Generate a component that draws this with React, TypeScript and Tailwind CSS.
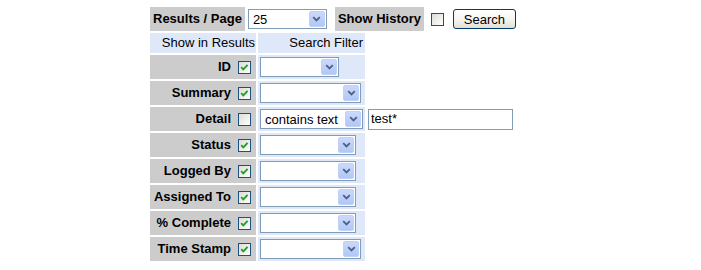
import React from "react";

const rows = [
  { label: "ID", checked: true, sel: "w-[79px]", value: "" },
  { label: "Summary", checked: true, sel: "w-[101px]", value: "" },
  { label: "Detail", checked: false, sel: "w-[103px]", value: "contains text", input: "test*" },
  { label: "Status", checked: true, sel: "w-[96px]", value: "" },
  { label: "Logged By", checked: true, sel: "w-[96px]", value: "" },
  { label: "Assigned To", checked: true, sel: "w-[96px]", value: "" },
  { label: "% Complete", checked: true, sel: "w-[96px]", value: "" },
  { label: "Time Stamp", checked: true, sel: "w-[101px]", value: "" },
];

function Checkbox({ checked }: { checked: boolean }) {
  return (
    <span className="inline-flex w-[13px] h-[13px] shrink-0 border border-[#1c5180] bg-gradient-to-br from-[#dcdcd7] to-white items-center justify-center">
      {checked && (
        <svg width="11" height="11" viewBox="0 0 11 11">
          <polyline points="2.2,5.2 4.3,7.4 8.6,2.8" fill="none" stroke="#21a121" strokeWidth="1.9" />
        </svg>
      )}
    </span>
  );
}

function Select({ width, value }: { width: string; value: string }) {
  return (
    <div className={`${width} h-[20px] flex items-center border border-[#7f9db9] bg-white`}>
      <span className="flex-1 pl-[4px] text-[13px] leading-none text-black whitespace-nowrap overflow-hidden">{value}</span>
      <span className="w-[16px] h-[16px] mr-[1px] rounded-[2px] border border-[#c0d0f6] bg-gradient-to-b from-[#cad9fd] to-[#b1c7f6] flex items-center justify-center">
        <svg width="9" height="6" viewBox="0 0 9 6">
          <polyline points="1.2,1.2 4.5,4.4 7.8,1.2" fill="none" stroke="#4d6185" strokeWidth="1.8" />
        </svg>
      </span>
    </div>
  );
}

export default function App() {
  return (
    <div className="w-[701px] h-[270px] bg-white pt-[7px] pl-[150px] font-['Liberation_Sans',Arial,sans-serif] text-[13px] text-black">
      <div className="flex items-center h-6">
        <div className="h-6 flex items-center px-[3px] bg-[#cccccc] font-bold">Results / Page</div>
        <div className="ml-[3px]">
          <Select width="w-[79px]" value="25" />
        </div>
        <div className="ml-[8px] h-6 flex items-center px-[3px] bg-[#cccccc] font-bold">Show History</div>
        <div className="ml-[7px] flex">
          <Checkbox checked={false} />
        </div>
        <button className="ml-[9px] w-[63px] h-[20px] border border-[#003c74] rounded-[3px] bg-gradient-to-b from-white via-[#f6f5f0] to-[#e3e0d3] text-[13px] leading-none">
          Search
        </button>
      </div>

      <table className="-ml-[2px] border-separate border-spacing-[2px]">
        <tbody>
          <tr className="h-[20px]">
            <td className="p-0 w-[106px] bg-[#dfe8f8] text-right pr-[1px] whitespace-nowrap">Show in Results</td>
            <td className="p-0 w-[107px] bg-[#dfe8f8] text-right pr-[2px] whitespace-nowrap">Search Filter</td>
            <td className="p-0"></td>
          </tr>
          {rows.map((r) => (
            <tr key={r.label} className="h-6">
              <td className="p-0 bg-[#cccccc]">
                <div className="flex items-center justify-end gap-[7px] pr-[5px] font-bold whitespace-nowrap">
                  <span>{r.label}</span>
                  <Checkbox checked={r.checked} />
                </div>
              </td>
              <td className="p-0 pl-[2px] bg-[#dfe8f8]">
                <Select width={r.sel} value={r.value} />
              </td>
              <td className="p-0 pl-[1px]">
                {r.input && (
                  <div className="w-[145px] h-[21px] flex items-center border border-[#7f9db9] bg-white pl-[2px]">
                    {r.input}
                  </div>
                )}
              </td>
            </tr>
          ))}
        </tbody>
      </table>
    </div>
  );
}
